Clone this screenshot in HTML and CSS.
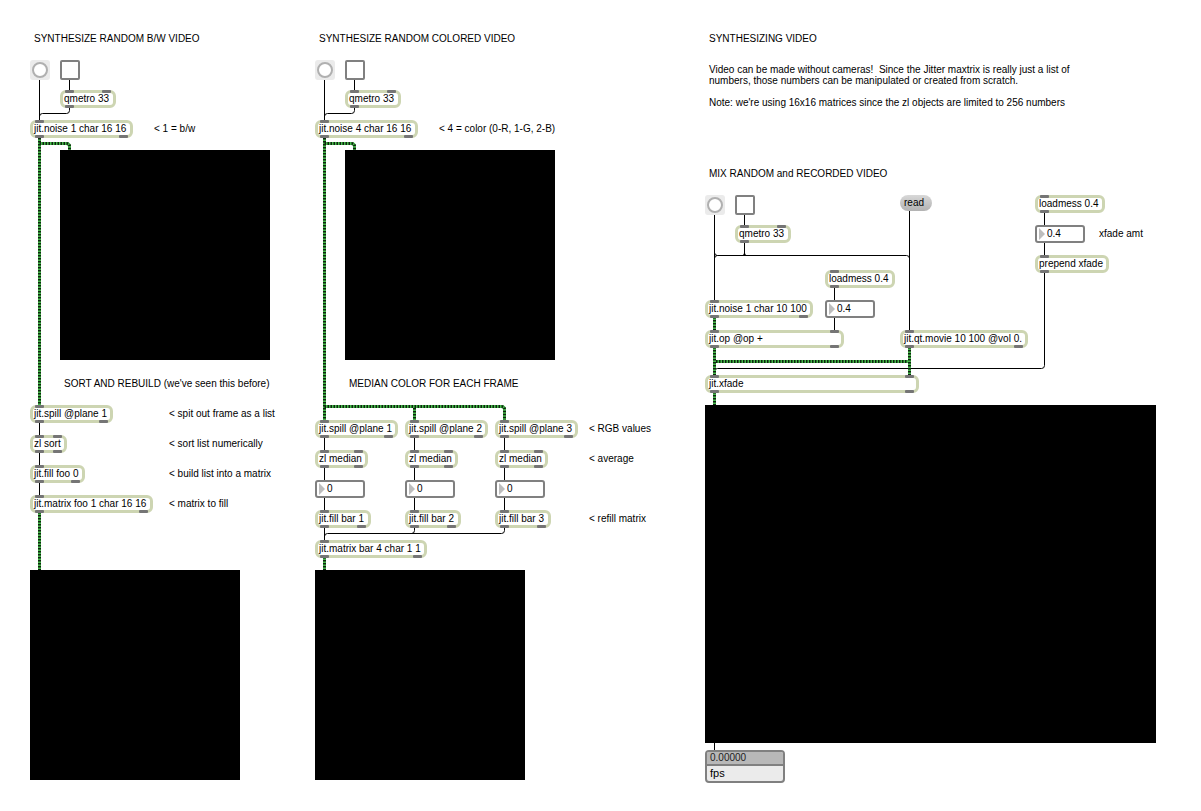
FILE: index.html
```html
<!DOCTYPE html>
<html lang="en">
<head>
<meta charset="utf-8">
<title>Synthesizing Video</title>
<link rel="stylesheet" href="styles.css">
</head>
<body>
<main class="canvas">
<svg class="cords" width="1201" height="811" aria-hidden="true">
  <g class="cord">
    <path d="M39.5 80V120M69.5 80V90M69.5 108V110.500Q69.5 113.500 66.500 113.500H42.500Q39.5 113.500 39.5 116.500"/>
    <path d="M39.5 423V435M39.5 453V465M39.5 483V495"/>
    <path d="M324.500 80V120M354.500 80V90M354.500 108V110.500Q354.500 113.500 351.500 113.500H327.500Q324.500 113.500 324.500 116.500"/>
    <path d="M324.500 438V450M324.500 468V480M324.500 498V510M324.500 528V540"/>
    <path d="M414.500 438V450M414.500 468V480M414.500 498V510M414.500 528V530.500Q414.500 533.500 411.500 533.500"/>
    <path d="M504.500 438V450M504.500 468V480M504.500 498V510M504.500 528V530.500Q504.500 533.500 501.500 533.500H327.500Q324.500 533.500 324.500 536.500"/>
    <path d="M714.500 215V300M744.500 215V225M744.500 243V255.500M714.500 258.500Q714.500 255.500 717.500 255.500H906.500Q909.500 255.500 909.500 258.500M714.500 252.500Q714.500 255.500 717.500 255.500M742.500 255.500Q744.500 255.500 744.500 253Q744.500 255.500 746.500 255.500"/>
    <path d="M909.500 211V330M834.500 288V300M834.500 318V330"/>
    <path d="M1044.500 213V225M1044.500 243V255M1044.500 273V365.500Q1044.500 368.500 1041.500 368.500H717.500Q714.500 368.500 714.500 371.500M714.500 743V750"/>
  </g>
  <defs>
    <g id="matrix-cords">
      <path d="M39.5 138V406M39.5 143.500H66.500Q69.5 143.500 69.5 146.500V151"/>
      <path d="M39.5 512V571"/>
      <path d="M324.500 138V421M324.500 143.500H351.500Q354.500 143.500 354.500 146.500V151"/>
      <path d="M324.500 406.500H501.500Q504.500 406.500 504.500 409.500V421M414.500 408V421M324.500 557V571"/>
      <path d="M714.500 317V331M714.500 347V376M714.500 392V406M909.500 347V376M716 361.500H908"/>
    </g>
  </defs>
  <use href="#matrix-cords" class="matrix"/>
  <use href="#matrix-cords" class="matrix stripe"/>
</svg>

<section class="patch bw">
  <h2 class="note heading">SYNTHESIZE RANDOM B/W VIDEO</h2>
  <button class="bang" aria-label="Bang"><svg viewBox="0 0 20 20"><circle cx="10" cy="10" r="7"/></svg></button>
  <input type="checkbox" class="toggle" aria-label="Metro on">
  <div class="obj qmetro"><i class="in"><b></b><b></b></i>qmetro 33<i class="out"><b></b></i></div>
  <div class="obj noise"><i class="in"><b></b></i>jit.noise 1 char 16 16<i class="out"><b></b><b></b></i></div>
  <p class="note planes">&lt; 1 = b/w</p>
  <div class="screen source"></div>
  <h3 class="note subheading">SORT AND REBUILD (we've seen this before)</h3>
  <div class="obj bw-spill"><i class="in"><b></b></i>jit.spill @plane 1<i class="out"><b></b><b></b></i></div>
  <div class="obj sort"><i class="in"><b></b><b></b></i>zl sort<i class="out"><b></b><b></b></i></div>
  <div class="obj bw-fill"><i class="in"><b></b></i>jit.fill foo 0<i class="out"><b></b><b></b></i></div>
  <div class="obj bw-matrix"><i class="in"><b></b></i>jit.matrix foo 1 char 16 16<i class="out"><b></b><b></b></i></div>
  <p class="note n-spit">&lt; spit out frame as a list</p>
  <p class="note n-sort">&lt; sort list numerically</p>
  <p class="note n-build">&lt; build list into a matrix</p>
  <p class="note n-fill">&lt; matrix to fill</p>
  <div class="screen result"></div>
</section>

<section class="patch color">
  <h2 class="note heading">SYNTHESIZE RANDOM COLORED VIDEO</h2>
  <button class="bang" aria-label="Bang"><svg viewBox="0 0 20 20"><circle cx="10" cy="10" r="7"/></svg></button>
  <input type="checkbox" class="toggle" aria-label="Metro on">
  <div class="obj qmetro"><i class="in"><b></b><b></b></i>qmetro 33<i class="out"><b></b></i></div>
  <div class="obj noise"><i class="in"><b></b></i>jit.noise 4 char 16 16<i class="out"><b></b><b></b></i></div>
  <p class="note planes">&lt; 4 = color (0-R, 1-G, 2-B)</p>
  <div class="screen source"></div>
  <h3 class="note subheading">MEDIAN COLOR FOR EACH FRAME</h3>
  <div class="channel red">
    <div class="obj spill"><i class="in"><b></b></i>jit.spill @plane 1<i class="out"><b></b><b></b></i></div>
    <div class="obj median"><i class="in"><b></b><b></b></i>zl median<i class="out"><b></b><b></b></i></div>
    <label class="num"><svg viewBox="0 0 6 12"><path d="M0 0L6 6L0 12Z"/></svg><input value="0" aria-label="Red median"></label>
    <div class="obj fill"><i class="in"><b></b></i>jit.fill bar 1<i class="out"><b></b><b></b></i></div>
  </div>
  <div class="channel green">
    <div class="obj spill"><i class="in"><b></b></i>jit.spill @plane 2<i class="out"><b></b><b></b></i></div>
    <div class="obj median"><i class="in"><b></b><b></b></i>zl median<i class="out"><b></b><b></b></i></div>
    <label class="num"><svg viewBox="0 0 6 12"><path d="M0 0L6 6L0 12Z"/></svg><input value="0" aria-label="Green median"></label>
    <div class="obj fill"><i class="in"><b></b></i>jit.fill bar 2<i class="out"><b></b><b></b></i></div>
  </div>
  <div class="channel blue">
    <div class="obj spill"><i class="in"><b></b></i>jit.spill @plane 3<i class="out"><b></b><b></b></i></div>
    <div class="obj median"><i class="in"><b></b><b></b></i>zl median<i class="out"><b></b><b></b></i></div>
    <label class="num"><svg viewBox="0 0 6 12"><path d="M0 0L6 6L0 12Z"/></svg><input value="0" aria-label="Blue median"></label>
    <div class="obj fill"><i class="in"><b></b></i>jit.fill bar 3<i class="out"><b></b><b></b></i></div>
  </div>
  <p class="note n-rgb">&lt; RGB values</p>
  <p class="note n-average">&lt; average</p>
  <p class="note n-refill">&lt; refill matrix</p>
  <div class="obj color-matrix"><i class="in"><b></b></i>jit.matrix bar 4 char 1 1<i class="out"><b></b><b></b></i></div>
  <div class="screen result"></div>
</section>

<section class="patch intro">
  <h1 class="note heading">SYNTHESIZING VIDEO</h1>
  <div class="note about">
    <p>Video can be made without cameras!&nbsp; Since the Jitter maxtrix is really just a list of<br>numbers, those numbers can be manipulated or created from scratch.</p>
    <p>Note: we're using 16x16 matrices since the zl objects are limited to 256 numbers</p>
  </div>
</section>

<section class="patch mix">
  <h2 class="note heading">MIX RANDOM and RECORDED VIDEO</h2>
  <button class="bang" aria-label="Bang"><svg viewBox="0 0 20 20"><circle cx="10" cy="10" r="7"/></svg></button>
  <input type="checkbox" class="toggle" aria-label="Metro on">
  <button class="message">read</button>
  <div class="obj qmetro"><i class="in"><b></b><b></b></i>qmetro 33<i class="out"><b></b></i></div>
  <div class="obj load-op"><i class="in"><b></b></i>loadmess 0.4<i class="out"><b></b></i></div>
  <label class="num num-op"><svg viewBox="0 0 6 12"><path d="M0 0L6 6L0 12Z"/></svg><input value="0.4" aria-label="Op amount"></label>
  <div class="obj mix-noise"><i class="in"><b></b></i>jit.noise 1 char 10 100<i class="out"><b></b><b></b></i></div>
  <div class="obj op"><i class="in"><b></b><b></b></i>jit.op @op +<i class="out"><b></b><b></b></i></div>
  <div class="obj movie"><i class="in"><b></b></i>jit.qt.movie 10 100 @vol 0.<i class="out"><b></b><b></b></i></div>
  <div class="obj load-fade"><i class="in"><b></b></i>loadmess 0.4<i class="out"><b></b></i></div>
  <label class="num num-fade"><svg viewBox="0 0 6 12"><path d="M0 0L6 6L0 12Z"/></svg><input id="fade" value="0.4"></label>
  <label class="note n-fade" for="fade">xfade amt</label>
  <div class="obj prepend"><i class="in"><b></b></i>prepend xfade<i class="out"><b></b></i></div>
  <div class="obj xfade"><i class="in"><b></b><b></b></i>jit.xfade<i class="out"><b></b><b></b></i></div>
  <div class="screen mixed"></div>
  <div class="fps"><output class="rate">0.00000</output><span class="unit">fps</span></div>
</section>
</main>
</body>
</html>
```
FILE: styles.css
```css
* { box-sizing: border-box; }
body {
  margin: 0;
  background: #fff;
  color: #000;
  font: 10px/12px "Liberation Sans", Arial, sans-serif;
}
h1, h2, h3, p { margin: 0; font: inherit; }
button, input { margin: 0; padding: 0; border: 0; font: inherit; color: inherit; }

.canvas { position: relative; min-height: 100vh; overflow: hidden; }
.cords { position: absolute; left: 0; top: 0; fill: none; }
.cord { stroke: #000; stroke-width: 1; }
.matrix { stroke: #46b84a; stroke-width: 3; }
.stripe { stroke: #0c260e; stroke-dasharray: 1.5 1.5; }

/* patch groups */
.patch { position: absolute; top: 0; }
.bw { left: 30px; }
.color { left: 315px; }
.intro, .mix { left: 705px; }
.mix { top: 135px; }

/* comments */
.note { position: absolute; white-space: nowrap; }
.heading { left: 4px; top: 33px; }
.subheading { left: 34px; top: 378px; }
.planes { left: 124px; top: 123px; }
.n-spit, .n-sort, .n-build, .n-fill { left: 139px; }
.n-spit { top: 408px; }
.n-sort { top: 438px; }
.n-build { top: 468px; }
.n-fill { top: 498px; }
.n-rgb, .n-average, .n-refill { left: 274px; }
.n-rgb { top: 423px; }
.n-average { top: 453px; }
.n-refill { top: 513px; }
.n-fade { left: 394px; top: 93px; }
.about { left: 4px; top: 64px; display: grid; gap: 11px; line-height: 11px; }

/* objects */
.obj {
  position: absolute;
  height: 18px;
  padding-left: 1px;
  border: 3px solid #cdd5b2;
  border-radius: 6px;
  background: #fff;
  white-space: nowrap;
}
.in, .out { position: absolute; left: 2px; right: 2px; display: flex; justify-content: space-between; }
.in { top: -3px; }
.out { bottom: -3px; }
.in b, .out b { width: 9px; height: 3px; border-radius: 1px; background: #757575; }

.qmetro { left: 30px; top: 90px; width: 56px; }
.noise { left: 0; top: 120px; width: 103px; }
.bw-spill { top: 405px; width: 83px; }
.sort { top: 435px; width: 37px; }
.bw-fill { top: 465px; width: 55px; }
.bw-matrix { top: 495px; width: 123px; }
.color-matrix { top: 540px; width: 112px; }
.load-op { left: 120px; top: 135px; width: 70px; }
.mix-noise { top: 165px; width: 108px; }
.op { top: 195px; width: 139px; }
.movie { left: 195px; top: 195px; width: 128px; }
.load-fade { left: 330px; top: 60px; width: 70px; }
.prepend { left: 330px; top: 120px; width: 74px; }
.xfade { top: 240px; width: 214px; }

/* controls */
.bang { position: absolute; left: 0; top: 60px; width: 20px; height: 20px; border-radius: 3px; background: #ebebeb; }
.bang svg { display: block; fill: #fff; stroke: #b0b0b0; stroke-width: 2; }
.toggle {
  position: absolute; left: 30px; top: 60px; width: 20px; height: 20px;
  appearance: none; border: 2px solid #808080; border-radius: 2px; background: #fff;
}
.message {
  position: absolute; left: 195px; top: 60px; width: 32px; height: 16px; padding-left: 4px;
  border-radius: 8px; background: linear-gradient(#d8d8d8, #b2b2b2); text-align: left;
}
.num {
  position: absolute; display: flex; align-items: center; width: 50px; height: 18px;
  padding-left: 2px; border: 2px solid #808080; border-radius: 3px; background: #fff;
}
.num svg { flex: none; width: 6px; height: 12px; fill: #bdbdbd; }
.num input { width: 30px; height: 12px; margin-left: 2px; background: none; }
.num-op { left: 120px; top: 165px; }
.num-fade { left: 330px; top: 90px; }

/* one column of objects per colour plane */
.channel { position: absolute; top: 420px; display: grid; gap: 12px; justify-items: start; }
.channel .obj, .channel .num { position: relative; }
.red { left: 0; }
.green { left: 90px; }
.blue { left: 180px; }
.spill { width: 83px; }
.median { width: 53px; }
.fill { width: 56px; }

/* video windows */
.screen { position: absolute; background: #000; }
.source { left: 30px; top: 150px; width: 210px; height: 210px; }
.result { left: 0; top: 570px; width: 210px; height: 210px; }
.mixed { left: 0; top: 270px; width: 451px; height: 338px; }

.fps {
  position: absolute; left: 0; top: 615px; width: 80px;
  border: 2px solid #808080; border-radius: 4px; background: #ebebeb; overflow: hidden;
}
.rate, .unit { display: block; padding-left: 3px; }
.rate { height: 14px; border-bottom: 2px solid #808080; background: #b8b8b8; color: #222; }
.unit { height: 15px; font-size: 11px; line-height: 15px; }
```
